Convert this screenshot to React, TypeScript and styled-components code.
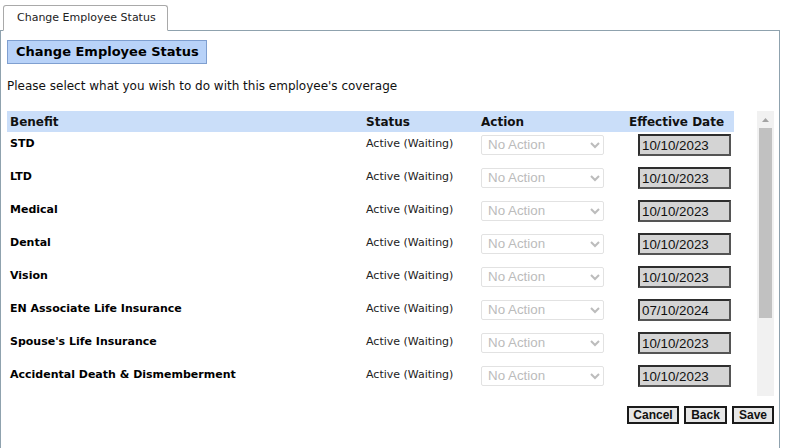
import React from "react";
import styled, { createGlobalStyle } from "styled-components";

const Global = createGlobalStyle`
  html, body { margin: 0; padding: 0; background: #fff; }
  body { font-family: "DejaVu Sans", Verdana, sans-serif; color: #000; }
`;

const Page = styled.div`
  width: 790px;
  height: 448px;
  overflow: hidden;
  padding-top: 5px;
  box-sizing: border-box;
`;

const TabStrip = styled.div`
  display: flex;
  padding-left: 3px;
`;

const Tab = styled.div`
  position: relative;
  z-index: 1;
  height: 26px;
  box-sizing: border-box;
  padding: 0 12px 0 13px;
  width: 165px;
  border: 1px solid #a9a9a9;
  border-bottom: 1px solid #fff;
  border-radius: 3px 3px 0 0;
  background: #fff;
  margin-bottom: -1px;
  font-size: 11px;
  line-height: 24px;
  color: #222;
  white-space: nowrap;
`;

const Panel = styled.div`
  width: 780px;
  height: 440px;
  box-sizing: border-box;
  border: 1px solid #8fa2ae;
  padding: 9px 5px 0 6px;
  display: flex;
  flex-direction: column;
`;

const TitleBox = styled.div`
  align-self: flex-start;
  width: 200px;
  height: 24px;
  box-sizing: border-box;
  border: 1px solid #7f9fd0;
  background: #b8d2f8;
  padding-left: 8px;
  font-size: 13px;
  font-weight: bold;
  line-height: 22px;
  color: #000;
`;

const Intro = styled.p`
  margin: 15px 0 0 0;
  font-size: 12px;
  line-height: 15px;
  color: #111;
`;

const Scroller = styled.div`
  margin-top: 17px;
  width: 767px;
  height: 285px;
  display: flex;
  justify-content: space-between;
`;

const TableArea = styled.div`
  width: 727px;
  height: 285px;
  overflow: hidden;
`;

const ScrollTrack = styled.div`
  width: 17px;
  height: 285px;
  background: #f1f1f1;
  display: flex;
  flex-direction: column;
  align-items: center;
`;

const ScrollButton = styled.div`
  width: 17px;
  height: 17px;
  display: flex;
  align-items: center;
  justify-content: center;
`;

const ScrollThumb = styled.div`
  width: 13px;
  height: 190px;
  background: #c1c1c1;
`;

const Cols = "356px 115px 148px 108px";

const HeaderRow = styled.div`
  display: grid;
  grid-template-columns: ${Cols};
  height: 21px;
  box-sizing: border-box;
  padding-top: 1px;
  background: #cadef9;
  font-weight: bold;
  font-size: 12px;
  line-height: 20px;
  color: #111;
`;

const HeadCell = styled.div`
  padding-left: 3px;
  white-space: nowrap;
`;

const Row = styled.div`
  display: grid;
  grid-template-columns: ${Cols};
  height: 33px;
  align-items: start;
`;

const NameCell = styled.div`
  padding: 5px 0 0 3px;
  font-size: 11px;
  font-weight: bold;
  line-height: 14px;
  white-space: nowrap;
`;

const StatusCell = styled.div`
  padding: 5px 0 0 3px;
  font-size: 11px;
  line-height: 14px;
  color: #222;
  white-space: nowrap;
`;

const ActionCell = styled.div`
  padding: 2px 0 0 3px;
`;

const DateCell = styled.div`
  padding: 2px 3px 0 0;
  display: flex;
  justify-content: flex-end;
`;

const ActionSelect = styled.select`
  width: 123px;
  height: 20px;
  font-family: "Liberation Sans", Arial, sans-serif;
  font-size: 13.333px;
  color: #a0a0a0;
  border: 1px solid #d6d6d6;
  border-radius: 2px;
  background: #fff;
  padding: 0 0 0 2px;
  margin: 0;
`;

const DateInput = styled.input`
  width: 93px;
  height: 22px;
  box-sizing: border-box;
  margin: 0;
  padding: 0 0 0 2px;
  border: 2px solid #2e2e2e;
  border-bottom-color: #555;
  border-right-color: #555;
  background: #d4d4d4;
  font-family: "Liberation Sans", Arial, sans-serif;
  font-size: 13.333px;
  color: #111;
  outline: none;
`;

const ButtonBar = styled.div`
  display: flex;
  justify-content: flex-end;
  gap: 5px;
  width: 767px;
  margin-top: 10px;
`;

const Btn = styled.button<{ $w: number }>`
  width: ${(p) => p.$w}px;
  height: 18px;
  box-sizing: border-box;
  margin: 0;
  padding: 0;
  border: 2px solid #1a1a1a;
  background: #e6e6e6;
  font-family: "Liberation Sans", Arial, sans-serif;
  font-weight: bold;
  font-size: 12px;
  line-height: 14px;
  color: #111;
`;

const benefits: { name: string; date: string }[] = [
  { name: "STD", date: "10/10/2023" },
  { name: "LTD", date: "10/10/2023" },
  { name: "Medical", date: "10/10/2023" },
  { name: "Dental", date: "10/10/2023" },
  { name: "Vision", date: "10/10/2023" },
  { name: "EN Associate Life Insurance", date: "07/10/2024" },
  { name: "Spouse's Life Insurance", date: "10/10/2023" },
  { name: "Accidental Death & Dismemberment", date: "10/10/2023" },
];

export default function App() {
  return (
    <Page>
      <Global />
      <TabStrip>
        <Tab>Change Employee Status</Tab>
      </TabStrip>
      <Panel>
        <TitleBox>Change Employee Status</TitleBox>
        <Intro>Please select what you wish to do with this employee's coverage</Intro>
        <Scroller>
          <TableArea>
            <HeaderRow>
              <HeadCell>Benefit</HeadCell>
              <HeadCell>Status</HeadCell>
              <HeadCell>Action</HeadCell>
              <HeadCell>Effective Date</HeadCell>
            </HeaderRow>
            {benefits.map((b) => (
              <Row key={b.name}>
                <NameCell>{b.name}</NameCell>
                <StatusCell>Active (Waiting)</StatusCell>
                <ActionCell>
                  <ActionSelect disabled defaultValue="none">
                    <option value="none">No Action</option>
                  </ActionSelect>
                </ActionCell>
                <DateCell>
                  <DateInput type="text" defaultValue={b.date} readOnly />
                </DateCell>
              </Row>
            ))}
          </TableArea>
          <ScrollTrack>
            <ScrollButton>
              <svg width="7" height="4" viewBox="0 0 7 4">
                <path d="M3.5 0 L7 4 L0 4 Z" fill="#a3a3a3" />
              </svg>
            </ScrollButton>
            <ScrollThumb />
          </ScrollTrack>
        </Scroller>
        <ButtonBar>
          <Btn $w={52}>Cancel</Btn>
          <Btn $w={43}>Back</Btn>
          <Btn $w={42}>Save</Btn>
        </ButtonBar>
      </Panel>
    </Page>
  );
}
